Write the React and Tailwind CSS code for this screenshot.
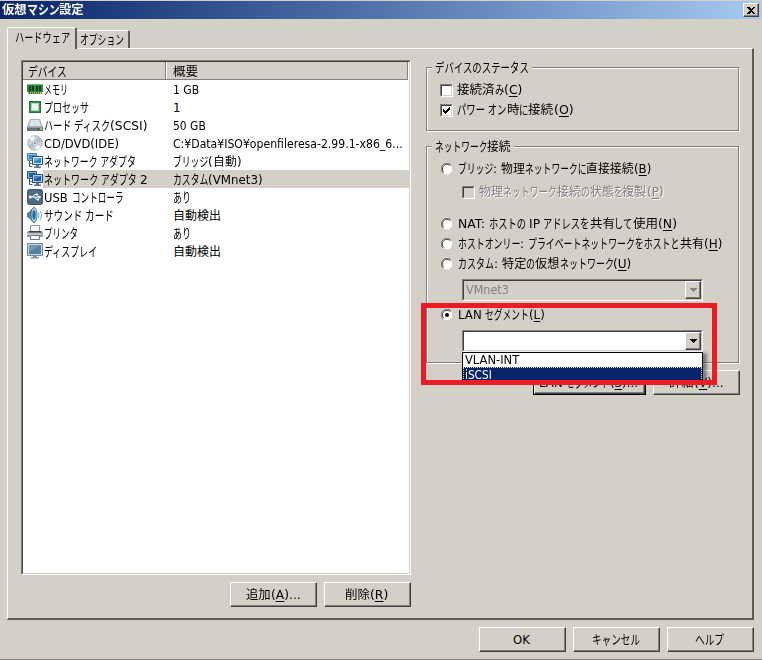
import React, { useLayoutEffect, useRef } from "react";

const FONT =
  "font-['DejaVu_Sans_Condensed','DejaVu_Sans','Noto_Sans_CJK_JP',sans-serif] [font-stretch:condensed]";

const KANA = /[\u3040-\u30ff]/;
const KANJI = /[\u3400-\u9fff]/;
const kindOf = (c) => (KANA.test(c) ? "kana" : KANJI.test(c) ? "kanji" : "latin");
const SIZE = { kana: "text-[13px]", kanji: "text-[12px]", latin: "text-[13px]" };

// Splits a label into script runs; "&X" marks X as the access key.
function toRuns(text) {
  const runs = [];
  for (let i = 0; i < text.length; i++) {
    let c = text[i];
    let key = false;
    if (c === "&") {
      key = true;
      c = text[++i];
    }
    const last = runs[runs.length - 1];
    const kind = c === " " && last ? last.kind : kindOf(c);
    if (last && last.kind === kind) last.chars.push({ c, key });
    else runs.push({ kind, chars: [{ c, key }] });
  }
  return runs;
}

// One line of text, with proportional narrow kana, set to a total width w.
function T({ w, kana = 0.67, children, className = "" }) {
  const ref = useRef(null);
  useLayoutEffect(() => {
    const ratio = { kana, kanji: 0.98, latin: 1 };
    const fit = () => {
      const outers = [...ref.current.children];
      const sizes = outers.map((o) => o.firstChild.offsetWidth * ratio[o.dataset.kind]);
      const g = w / sizes.reduce((a, b) => a + b, 0);
      outers.forEach((o, i) => {
        o.style.width = sizes[i] * g + "px";
        o.firstChild.style.transform = `scaleX(${ratio[o.dataset.kind] * g})`;
      });
    };
    fit();
    document.fonts?.ready.then(() => ref.current && fit());
  }, [w, kana, children]);
  return (
    <span ref={ref} className={`inline-flex h-4 shrink-0 items-baseline whitespace-pre leading-4 ${className}`}>
      {toRuns(children).map((r, i) => (
        <span key={i} data-kind={r.kind} className="inline-block">
          <span className={`inline-block origin-left ${SIZE[r.kind]}`}>
            {r.chars.map((x, j) => (x.key ? <u key={j} className="underline-offset-2">{x.c}</u> : x.c))}
          </span>
        </span>
      ))}
    </span>
  );
}

function Button({ w = "w-[87px]", tw, primary, children }) {
  return (
    <button className={`${w} flex h-[25px] shrink-0 ${primary ? "border border-black" : ""}`}>
      <span className="flex h-full w-full items-center justify-center border border-t-white border-l-white border-r-[#404040] border-b-[#404040] pr-[2px] shadow-[inset_-1px_-1px_0_#808080]">
        <T w={tw}>{children}</T>
      </span>
    </button>
  );
}

function Check({ checked, disabled }) {
  return (
    <span
      className={`flex h-[13px] w-[13px] shrink-0 border border-t-[#808080] border-l-[#808080] border-r-white border-b-white ${disabled ? "" : "bg-white"}`}
    >
      <span className="flex h-[11px] w-[11px] border border-t-[#404040] border-l-[#404040] border-r-[#d4d0c8] border-b-[#d4d0c8]">
        {checked && (
          <svg width="9" height="9" viewBox="0 0 9 9" shapeRendering="crispEdges">
            <path d="M1 3v3l2 2 5-5V0L3 5z" fill="#000" />
          </svg>
        )}
      </span>
    </span>
  );
}

function Radio({ checked }) {
  return (
    <svg className="shrink-0" width="12" height="12" viewBox="0 0 12 12">
      <circle cx="6" cy="6" r="5.2" fill="#fff" />
      <path d="M1.9 10.1A5.6 5.6 0 0 1 10.1 1.9" fill="none" stroke="#808080" />
      <path d="M2.7 9.3A4.6 4.6 0 0 1 9.3 2.7" fill="none" stroke="#404040" />
      {checked && <circle cx="6" cy="6" r="2" fill="#000" />}
    </svg>
  );
}

function Option({ h, kind, checked, tw, children }) {
  return (
    <label className={`flex items-center ${h}`}>
      <span className="flex w-[17px] shrink-0">{kind === "check" ? <Check checked={checked} /> : <Radio checked={checked} />}</span>
      <T w={tw}>{children}</T>
    </label>
  );
}

function Group({ title, tw, className, children }) {
  return (
    <section className={`relative border border-[#808080] shadow-[1px_1px_0_#fff,inset_1px_1px_0_#fff] ${className}`}>
      <span className="absolute -top-2 left-[5px] flex bg-[#d4d0c8] px-[3px]">
        <T w={tw}>{title}</T>
      </span>
      {children}
    </section>
  );
}

function Combo({ disabled, children }) {
  return (
    <div
      className={`ml-[22px] h-[22px] w-[241px] border border-t-[#808080] border-l-[#808080] border-r-white border-b-white ${disabled ? "" : "bg-white"}`}
    >
      <div className="flex h-full items-center justify-end border border-t-[#404040] border-l-[#404040] border-r-[#d4d0c8] border-b-[#d4d0c8] pl-0.5">
        {children && <span className="flex flex-1 text-[#808080]">{children}</span>}
        <span className="flex h-full w-4 items-center justify-center border border-t-white border-l-white border-r-[#404040] border-b-[#404040] bg-[#d4d0c8] shadow-[inset_-1px_-1px_0_#808080]">
          <svg width="7" height="4" viewBox="0 0 7 4" shapeRendering="crispEdges">
            <path d="M0 0h7L3.5 4z" fill={disabled ? "#808080" : "#000"} />
          </svg>
        </span>
      </div>
    </div>
  );
}

const Svg = ({ children }) => (
  <svg width="16" height="16" viewBox="0 0 16 16">{children}</svg>
);

const network = (selected) => (
  <Svg>
    <path d="M.5.5h9v7h-9z" fill="#7db4dc" stroke={selected ? "#2c5687" : "#4b86b4"} />
    <path d="M2 2h6v4H2z" fill={selected ? "#27609b" : "#3f8ccc"} />
    <path d="M2.5 8v5.5h3M2.5 10.5h2" fill="none" stroke="#37566f" />
    <path d="M5.5 3.5h10v8h-10z" fill={selected ? "#b5cadd" : "#dcebf5"} stroke="#264f76" />
    <path d="M7 5h7v5H7z" fill={selected ? "#205ba3" : "#2685d5"} />
    <path d="M7 5h7L7 9z" fill={selected ? "#4985bf" : "#65b4ed"} />
    <path d="M9 12h3v1.5h2V15H7v-1.5h2z" fill="#577991" />
  </Svg>
);

const icons = {
  memory: (
    <Svg>
      <path d="M0 3h16v8h-1v2H1v-2H0z" fill="#2d8a3c" />
      <path d="M0 3h16v1H0z" fill="#6cbb69" />
      <path d="M2 5h2v5H2zM5 5h2v5H5zM9 5h2v5H9zM12 5h2v5h-2z" fill="#24362a" />
      <path d="M1 11h14v2H1z" fill="#a9bd62" />
      <path d="M2.5 11v2M4.5 11v2M6.5 11v2M8.5 11v2M10.5 11v2M12.5 11v2" stroke="#2d7a37" />
    </Svg>
  ),
  cpu: (
    <Svg>
      <path d="M2 2h12v12H2z" fill="#2e9446" />
      <path d="M2.5 2.5h11v11h-11z" fill="none" stroke="#23733a" />
      <path d="M4 4h8v8H4z" fill="#bfd0c0" />
      <path d="M5 5h6v6H5z" fill="#eef1ee" />
    </Svg>
  ),
  disk: (
    <Svg>
      <path d="M3 2h10l3 8H0z" fill="#a9b3bc" />
      <path d="M4 3h8l2 6H2z" fill="#dee4e8" />
      <path d="M0 10h16v4H0z" fill="#65727e" />
      <path d="M.5 10.5h15" stroke="#919ca5" />
      <path d="M11 11h1v2h-1z" fill="#35414b" />
      <path d="M13 11h2v2h-2z" fill="#85cf4d" />
    </Svg>
  ),
  cd: (
    <Svg>
      <circle cx="8" cy="8" r="7.3" fill="#ccd3da" stroke="#9ba5af" strokeWidth=".8" />
      <path d="M8 8 2 3.5A7 7 0 0 1 7 1zM8 8l6 4.5A7 7 0 0 1 9 15z" fill="#f5f7f8" />
      <path d="M8 8 11 1.8A7 7 0 0 1 14.5 6zM8 8 5 14.2A7 7 0 0 1 1.5 10z" fill="#b2bdc8" />
      <circle cx="8" cy="8" r="2.7" fill="#e3e8ec" stroke="#a1abb5" strokeWidth=".7" />
      <circle cx="8" cy="8" r="1.1" fill="#7c8791" />
    </Svg>
  ),
  network: network(false),
  networkSelected: network(true),
  usb: (
    <Svg>
      <rect x=".5" y=".5" width="15" height="15" rx="2" fill="#4e6a82" stroke="#41596d" />
      <path d="M3 8h9M5.5 8l2-2.5h2M7.5 8l2 2.5h1.5" fill="none" stroke="#fff" />
      <circle cx="3.2" cy="8" r="1.5" fill="#fff" />
      <path d="m11.5 6.2 3 1.8-3 1.8zM9 4.5h2v2H9zM10 9.5h2v2h-2z" fill="#fff" />
    </Svg>
  ),
  sound: (
    <Svg>
      <path d="M0 6.5Q0 5 2 5l4-4.5q2-1 2 0v15q0 1-2 0L2 11q-2 0-2-1.5z" fill="#567f9f" />
      <ellipse cx="7" cy="8" rx="3" ry="7.4" fill="#c3d8e6" stroke="#3b627d" strokeWidth=".8" />
      <ellipse cx="7" cy="8" rx="1.7" ry="4.8" fill="#1772b4" />
      <path d="M11.3 5q1.6 3 0 6M13.3 3.5q2.8 4.500 0 9" fill="none" stroke="#7aadd0" />
    </Svg>
  ),
  printer: (
    <Svg>
      <path d="M3.500.5h9v6h-9z" fill="#f7f8fa" stroke="#9298a1" />
      <path d="M1 6h14l1 1v5H0V7z" fill="#9b9dad" />
      <path d="M2 6h12v1.500H2z" fill="#3e444f" />
      <path d="M0 8h16v2H0z" fill="#c3c4d0" />
      <path d="M3.500 10.500h9v4h-9z" fill="#fff" stroke="#6f7681" />
      <path d="M13 8h2v1h-2z" fill="#4fcb42" />
    </Svg>
  ),
  display: (
    <Svg>
      <path d="M.5 .5h15v12H.5z" fill="#cbd5dd" stroke="#71889a" />
      <path d="M2 2h12v9H2z" fill="#56809f" />
      <path d="M2 2h12L2 9z" fill="#7296b3" />
      <path d="M6 13h4v1h2v1.500H4V14h2z" fill="#82939f" />
    </Svg>
  ),
};

const devices = [
  ["memory", "メモリ", 24, "1 GB", 26],
  ["cpu", "プロセッサ", 45, "1", 7],
  ["disk", "ハード ディスク(SCSI)", 104, "50 GB", 33],
  ["cd", "CD/DVD(IDE)", 75, "C:¥Data¥ISO¥openfileresa-2.99.1-x86_6...", 230],
  ["network", "ネットワーク アダプタ", 92, "ブリッジ(自動)", 69],
  ["networkSelected", "ネットワーク アダプタ 2", 103, "カスタム(VMnet3)", 90],
  ["usb", "USB コントローラ", 79, "あり", 18],
  ["sound", "サウンド カード", 70, "自動検出", 48],
  ["printer", "プリンタ", 34, "あり", 18],
  ["display", "ディスプレイ", 53, "自動検出", 48],
];

export default function App() {
  return (
    <div className={`flex h-[660px] w-[762px] flex-col overflow-hidden border-b border-[#808080] bg-[#d4d0c8] pt-px text-[13px] text-black ${FONT}`}>
      <header className="flex h-[18px] w-[761px] shrink-0 items-center justify-between bg-linear-to-r from-[#0a246a] to-[#a6caf0] pr-[2px] pl-[2px] text-white">
        <T w={82} kana={0.8} className="font-bold">仮想マシン設定</T>
        <button className="flex h-[14px] w-4 items-center justify-center border border-t-white border-l-white border-r-[#404040] border-b-[#404040] bg-[#d4d0c8] shadow-[inset_-1px_-1px_0_#808080]">
          <svg width="8" height="7" viewBox="0 0 8 7" shapeRendering="crispEdges">
            <path d="M0 0h2l2 2 2-2h2L5 3.5 8 7H6L4 5 2 7H0l3-3.5z" fill="#000" />
          </svg>
        </button>
      </header>

      <nav className="mt-2 flex h-[21px] shrink-0 items-end pl-[7px]">
        <div className="z-10 -mb-px flex h-[22px] w-[70px] rounded-t-[2px] border-t border-r-2 border-l border-t-white border-r-[#5c5a57] border-l-white bg-[#d4d0c8] pt-[2px] pl-[7px]">
          <T w={55}>ハードウェア</T>
        </div>
        <div className="flex h-[18px] w-[53px] rounded-tr-[2px] border-t border-r-2 border-t-white border-r-[#5c5a57] pt-px pl-[3px]">
          <T w={44}>オプション</T>
        </div>
      </nav>

      <main className="ml-[7px] flex h-[572px] w-[747px] shrink-0 border-t border-r-2 border-b-2 border-l border-t-white border-r-[#5c5a57] border-b-[#5c5a57] border-l-white">
        <div className="ml-[13px] w-[390px] pt-[11px]">
          <div className="h-[515px] border border-t-[#808080] border-l-[#808080] border-r-white border-b-white bg-white">
            <div className="h-full border border-t-[#404040] border-l-[#404040] border-r-[#d4d0c8] border-b-[#d4d0c8]">
              <div className="flex h-[18px] w-[385px] border-r border-b border-[#808080] bg-[#d4d0c8]">
                <div className="flex w-[143px] border-r border-[#808080] pt-[2px] pl-[5px]">
                  <T w={39}>デバイス</T>
                </div>
                <div className="flex flex-1 border-l border-white pt-[2px] pl-[6px]">
                  <T w={25}>概要</T>
                </div>
              </div>
              {devices.map(([icon, name, nw, info, iw], i) => (
                <div key={i} className="flex h-[18px] items-center pl-[4px]">
                  <span className="w-4 shrink-0">{icons[icon]}</span>
                  <div className={`flex h-full flex-1 pt-[2px] pl-px ${i === 5 ? "bg-[#d4d0c8]" : ""}`}>
                    <span className="flex w-[129px] shrink-0"><T w={nw}>{name}</T></span>
                    <T w={iw}>{info}</T>
                  </div>
                </div>
              ))}
            </div>
          </div>
          <div className="mt-[7px] flex justify-end gap-[7px]">
            <Button tw={54}>追加(&A)...</Button>
            <Button tw={43}>削除(&R)</Button>
          </div>
        </div>

        <div className="ml-[15px] w-[315px] pt-[18px]">
          <Group title="デバイスのステータス" tw={94} className="h-[64px] w-[313px] pt-[12px] pl-[13px]">
            <Option h="h-5" kind="check" tw={65}>接続済み(&C)</Option>
            <Option h="h-5" kind="check" checked tw={116}>パワー オン時に接続(&O)</Option>
          </Group>
          <Group title="ネットワーク接続" tw={76} className="mt-[15px] h-[217px] w-[313px] pt-[12px] pl-[14px]">
            <div className="-mr-2">
              <Option h="h-5" tw={193}>ブリッジ: 物理ネットワークに直接接続(&B)</Option>
              <div className="mt-[3px] flex h-5 items-center pl-[21px] text-[#808080] [text-shadow:1px_1px_0_#fff]">
                <span className="w-[17px]"><Check disabled /></span>
                <T w={184}>物理ネットワーク接続の状態を複製(&P)</T>
              </div>
              <div className="mt-[12px]">
                <Option h="h-5" tw={219}>NAT: ホストの IP アドレスを共有して使用(&N)</Option>
                <Option h="h-5" tw={264}>ホストオンリー: プライベートネットワークをホストと共有(&H)</Option>
                <Option h="h-5" tw={174}>カスタム: 特定の仮想ネットワーク(&U)</Option>
              </div>
              <div className="-ml-px mt-[5px]">
                <Combo disabled><T w={43}>VMnet3</T></Combo>
              </div>
              <div className="mt-[4px]">
                <Option h="h-5" checked tw={87}>LAN セグメント(&L)</Option>
              </div>
              <div className="relative -ml-px mt-[5px]">
                <Combo />
                <div className="absolute top-[22px] left-[22px] z-10 h-[28px] w-[241px] border-x border-t border-black bg-white shadow-[4px_1px_3px_rgba(0,0,0,0.4)]">
                  <div className="flex h-[14px] items-center pl-[2px]"><T w={54}>VLAN-INT</T></div>
                  <div className="flex h-[14px] items-center border border-b-0 border-dotted border-[#f5db95] bg-[#0a246a] pl-px text-white"><T w={27}>iSCSI</T></div>
                </div>
                <div className="absolute top-[-27px] left-[-19px] z-20 h-[82px] w-[296px] border-5 border-[#ed1c24]" />
              </div>
            </div>
          </Group>
          <div className="mt-[7px] flex justify-end gap-[7px] pr-px">
            <Button w="w-[113px]" tw={99} primary>LAN セグメント(&S)...</Button>
            <Button tw={54}>詳細(&V)...</Button>
          </div>
        </div>
      </main>

      <footer className="mt-[7px] flex shrink-0 justify-end gap-[7px] pr-[8px]">
        <Button tw={17}>OK</Button>
        <Button tw={48}>キャンセル</Button>
        <Button tw={29}>ヘルプ</Button>
      </footer>
    </div>
  );
}
